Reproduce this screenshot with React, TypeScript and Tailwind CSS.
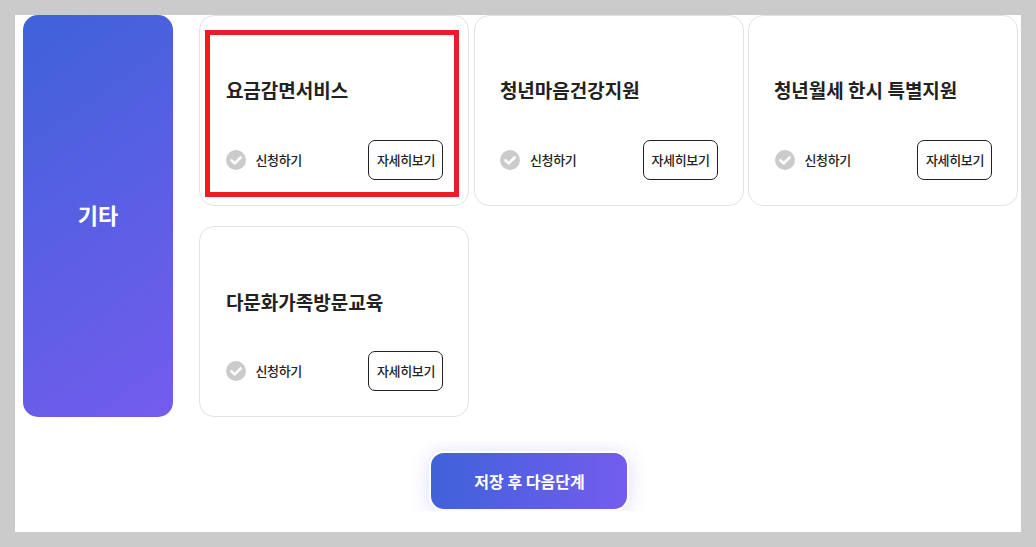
import React from "react";

function Card({ title, highlighted, titleClass }: { title: string; highlighted?: boolean; titleClass?: string }) {
  return (
    <div className="relative flex h-[191px] flex-col rounded-[15px] border border-[#e2e2e2] bg-white pl-[25.9px] pr-[25px]">
      <div className={`mt-[60px] h-[28px] text-[19px] leading-[28px] font-bold whitespace-nowrap text-[#222222] ${titleClass ?? ""}`}>
        {title}
      </div>
      <div className="mt-[36px] flex items-center justify-between">
        <div className="flex items-center gap-[9.6px]">
          <svg width="20" height="20" viewBox="0 0 20 20" aria-hidden="true">
            <circle cx="10" cy="10" r="10" fill="#cbcbcb" />
            <path d="M5.4 10.3 8.7 13.4 14.6 7.5" fill="none" stroke="#ffffff" strokeWidth="2.6" strokeLinecap="round" strokeLinejoin="round" />
          </svg>
          <span className="pb-[1px] text-[13px] leading-[20px] font-medium tracking-[-0.35px] text-[#222222]">신청하기</span>
        </div>
        <button className="flex h-[40px] w-[75px] items-center justify-center rounded-[7px] border border-[#222222] bg-white pl-[1px] text-[13px] font-medium tracking-[-0.35px] whitespace-nowrap text-[#222222]">
          자세히보기
        </button>
      </div>
      {highlighted && (
        <div className="absolute top-[14px] left-[5px] h-[167px] w-[254px] border-[5px] border-[#ed1c24]" />
      )}
    </div>
  );
}

export default function App() {
  return (
    <div
      className="h-[547px] w-[1036px] overflow-hidden bg-[#cbcbcb] p-[15px]"
      style={{ fontFamily: '"Noto Sans CJK KR", "Noto Sans", sans-serif' }}
    >
      <div className="h-[517px] w-[1006px] bg-white pl-[8px]">
        <div className="flex gap-[26px]">
          <div className="flex h-[402px] w-[150px] items-center justify-center rounded-[15px] bg-[linear-gradient(145deg,#3f62d9,#745cee)] pb-[3px] text-[22px] font-bold text-white">
            기타
          </div>
          <div className="grid grid-cols-[270px_270px_270px] gap-x-[4.5px] gap-y-[20px]">
            <Card title="요금감면서비스" highlighted />
            <Card title="청년마음건강지원" titleClass="-ml-[0.5px]" />
            <Card title="청년월세 한시 특별지원" titleClass="-ml-[1px]" />
            <Card title="다문화가족방문교육" titleClass="relative top-[1px]" />
          </div>
        </div>
        <div className="mt-[24px] flex h-[70px] justify-center overflow-hidden pl-[14px]">
          <div className="px-[30px] pt-[10px]">
            <button className="flex h-[60px] w-[200px] items-center justify-center rounded-[15px] border-2 border-white bg-[linear-gradient(90deg,#3f62d9,#745cee)] pb-[1px] pl-[1px] text-[16px] font-bold text-white shadow-[0_2px_20px_rgba(90,80,230,0.2)]">
              저장 후 다음단계
            </button>
          </div>
        </div>
      </div>
    </div>
  );
}
